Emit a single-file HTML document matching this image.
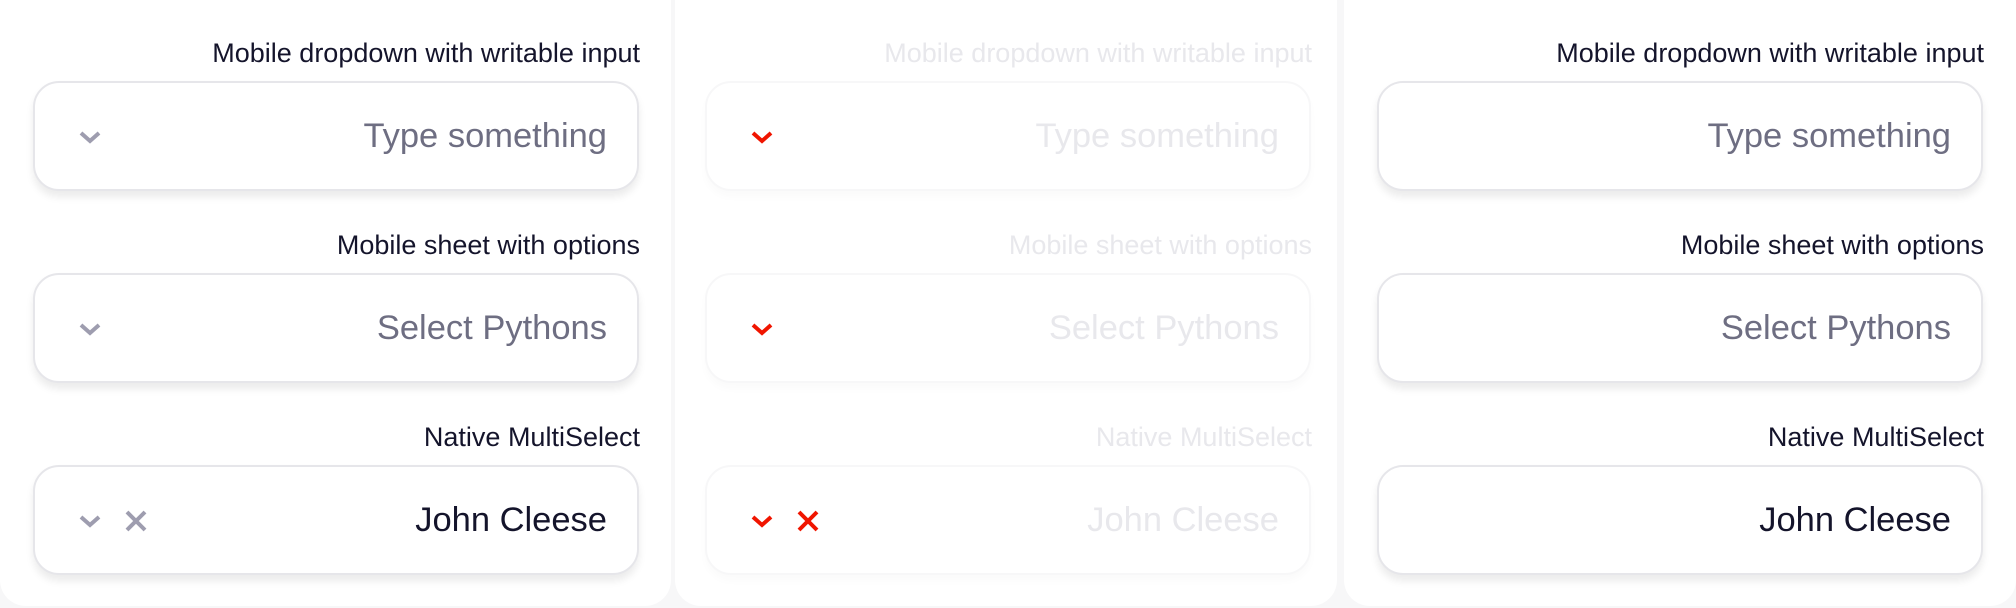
<!DOCTYPE html>
<html><head><style>
html,body{margin:0;padding:0}
body{width:2016px;height:608px;background:#f7f7f8;position:relative;overflow:hidden;font-family:"Liberation Sans",sans-serif}
.panel{position:absolute;top:-30px;height:636px;background:#fff;border-radius:0 0 26px 26px}
.lbl{position:absolute;font-size:27px;color:#14142b;text-align:right;white-space:nowrap}
.box{position:absolute;height:110px;border:2px solid #e6e6ea;border-radius:26px;background:#fff;box-shadow:0 6px 8px rgba(0,0,0,0.08);box-sizing:border-box}
.val{position:absolute;right:30px;top:34px;font-size:34.5px;color:#6e6e82;white-space:nowrap}
.val.sel{color:#14142b}
svg{position:absolute}
.fade .lbl,.fade .val{color:#e8e8ec}
.fade .box{border-color:#f7f7f8;box-shadow:0 6px 8px rgba(0,0,0,0.02)}
</style></head><body>
<div class="panel" style="left:0;width:671px"></div>
<div class="panel" style="left:675px;width:662px"></div>
<div class="panel" style="left:1344px;width:672px"></div>

<div>
<div class="lbl" style="right:1376px;top:38px">Mobile dropdown with writable input</div>
<div class="box" style="left:33px;top:81px;width:606px"><svg style="left:43px;top:47px" width="24" height="16"><path d="M3 3l9 8 9-8" stroke="#9e9daf" stroke-width="4" fill="none"/></svg><div class="val">Type something</div></div>
<div class="lbl" style="right:1376px;top:230px">Mobile sheet with options</div>
<div class="box" style="left:33px;top:273px;width:606px"><svg style="left:43px;top:47px" width="24" height="16"><path d="M3 3l9 8 9-8" stroke="#9e9daf" stroke-width="4" fill="none"/></svg><div class="val">Select Pythons</div></div>
<div class="lbl" style="right:1376px;top:422px">Native MultiSelect</div>
<div class="box" style="left:33px;top:465px;width:606px"><svg style="left:43px;top:47px" width="24" height="16"><path d="M3 3l9 8 9-8" stroke="#9e9daf" stroke-width="4" fill="none"/></svg><svg style="left:88px;top:41px" width="26" height="26"><path d="M4 4l18 18M22 4L4 22" stroke="#9e9daf" stroke-width="4" fill="none"/></svg><div class="val sel">John Cleese</div></div>
</div>

<div class="fade">
<div class="lbl" style="right:704px;top:38px">Mobile dropdown with writable input</div>
<div class="box" style="left:705px;top:81px;width:606px"><svg style="left:43px;top:47px" width="24" height="16"><path d="M3 3l9 8 9-8" stroke="#f01500" stroke-width="4" fill="none"/></svg><div class="val">Type something</div></div>
<div class="lbl" style="right:704px;top:230px">Mobile sheet with options</div>
<div class="box" style="left:705px;top:273px;width:606px"><svg style="left:43px;top:47px" width="24" height="16"><path d="M3 3l9 8 9-8" stroke="#f01500" stroke-width="4" fill="none"/></svg><div class="val">Select Pythons</div></div>
<div class="lbl" style="right:704px;top:422px">Native MultiSelect</div>
<div class="box" style="left:705px;top:465px;width:606px"><svg style="left:43px;top:47px" width="24" height="16"><path d="M3 3l9 8 9-8" stroke="#f01500" stroke-width="4" fill="none"/></svg><svg style="left:88px;top:41px" width="26" height="26"><path d="M4 4l18 18M22 4L4 22" stroke="#f01500" stroke-width="4" fill="none"/></svg><div class="val">John Cleese</div></div>
</div>

<div>
<div class="lbl" style="right:32px;top:38px">Mobile dropdown with writable input</div>
<div class="box" style="left:1377px;top:81px;width:606px"><div class="val">Type something</div></div>
<div class="lbl" style="right:32px;top:230px">Mobile sheet with options</div>
<div class="box" style="left:1377px;top:273px;width:606px"><div class="val">Select Pythons</div></div>
<div class="lbl" style="right:32px;top:422px">Native MultiSelect</div>
<div class="box" style="left:1377px;top:465px;width:606px"><div class="val sel">John Cleese</div></div>
</div>
</body></html>
